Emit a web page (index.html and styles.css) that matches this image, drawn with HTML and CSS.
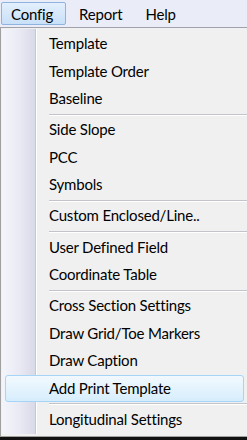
FILE: index.html
```html
<!DOCTYPE html>
<html>
<head>
<meta charset="utf-8">
<link rel="stylesheet" href="styles.css">
</head>
<body>
<div class="screen">
  <div class="menubar">
    <div class="top-item active">Config</div>
    <div class="top-item report">Report</div>
    <div class="top-item help">Help</div>
  </div>
  <div class="menu">
    <div class="menu-inner">
      <div class="item">Template</div>
      <div class="item">Template Order</div>
      <div class="item">Baseline</div>
      <div class="sep"></div>
      <div class="item">Side Slope</div>
      <div class="item">PCC</div>
      <div class="item">Symbols</div>
      <div class="sep"></div>
      <div class="item">Custom Enclosed/Line..</div>
      <div class="sep"></div>
      <div class="item">User Defined Field</div>
      <div class="item">Coordinate Table</div>
      <div class="sep"></div>
      <div class="item">Cross Section Settings</div>
      <div class="item">Draw Grid/Toe Markers</div>
      <div class="item">Draw Caption</div>
      <div class="item hot">Add Print Template</div>
      <div class="sep"></div>
      <div class="item">Longitudinal Settings</div>
    </div>
  </div>
</div>
</body>
</html>
```
FILE: styles.css
```css
html, body {
  margin: 0;
  padding: 0;
  background: #111;
}
.screen {
  width: 247px;
  height: 440px;
  background: #111;
  font-family: Lato, "Open Sans", sans-serif;
  font-size: 15px;
  letter-spacing: -0.2px;
  color: #000;
  overflow: hidden;
}
.menubar {
  background: #eaedf8;
  border-bottom: 1px solid #a0a1ab;
  display: flex;
  align-items: flex-start;
  padding-top: 2px;
  padding-left: 1px;
  box-sizing: border-box;
  height: 28px;
}
.top-item {
  height: 23px;
  line-height: 22px;
  box-sizing: border-box;
  white-space: nowrap;
}
.top-item.active {
  width: 65px;
  padding-left: 9px;
  border: 1px solid #8db3de;
  border-radius: 2px;
  background: linear-gradient(#e3effc, #c8e0f8);
}
.top-item.report {
  margin-left: 13px;
  padding-top: 1px;
}
.top-item.help {
  margin-left: 23px;
  padding-top: 1px;
}
.menu {
  background: #f0f0f0;
  border-left: 1px solid #a0a0a0;
  border-bottom: 1px solid #a0a0a0;
  padding: 1px 0 2px 1px;
}
.menu-inner {
  padding: 1px 0 1px 0;
  background: linear-gradient(to right, #f4f5fb 0, #e8e9f3 18px, #d9dae8 33px, #c6c7d2 33px, #c6c7d2 34px, #ffffff 34px, #ffffff 35px, #f0f0f0 35px);
}
.item {
  height: 27.5px;
  margin: 0 3px;
  padding-left: 43px;
  box-sizing: border-box;
  white-space: nowrap;
  border: 1px solid transparent;
  border-radius: 3px;
  line-height: 25.5px;
}
.item.hot {
  border-color: #a6d4f6;
  background: linear-gradient(#f2f9fe, #d7edfc);
}
.sep {
  height: 3.7px;
  margin-left: 47px;
  box-sizing: border-box;
  padding-top: 1px;
}
.sep::before {
  content: "";
  display: block;
  height: 1px;
  background: #c3c3cb;
}
.sep::after {
  content: "";
  display: block;
  height: 1px;
  background: #ffffff;
}
```
